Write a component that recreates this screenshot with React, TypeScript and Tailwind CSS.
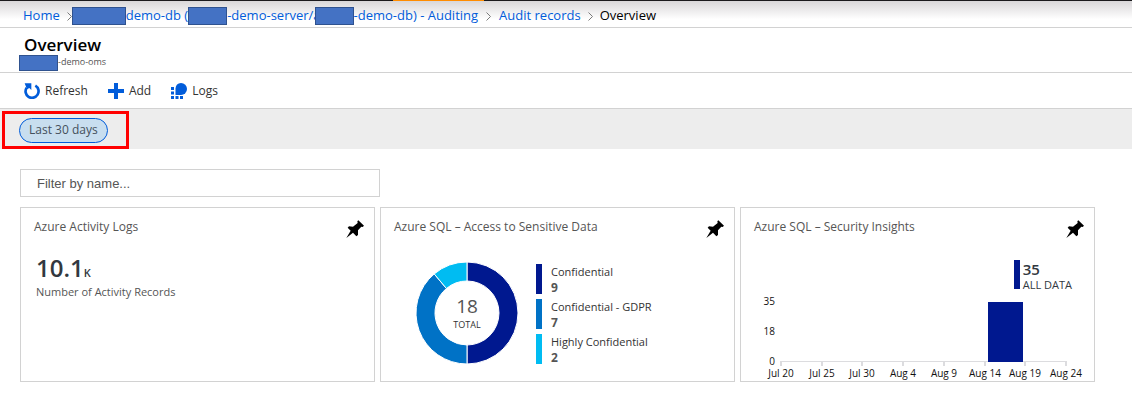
import React from "react";

const LINK = "text-[#015cda]";

function Redacted({ className }: { className: string }) {
  return (
    <span
      aria-hidden="true"
      className={`relative inline-block shrink-0 border border-[#2f528f] bg-[#4472c4] ${className}`}
    />
  );
}

function Chevron({ className = "" }: { className?: string }) {
  return (
    <svg
      aria-hidden="true"
      viewBox="0 0 5 9"
      className={`h-[9px] w-[5px] shrink-0 ${className}`}
      fill="none"
      stroke="#7a7a7a"
      strokeWidth="1"
    >
      <path d="M.5 .5 4.5 4.5 .5 8.5" />
    </svg>
  );
}

function Breadcrumb() {
  return (
    <nav
      aria-label="Breadcrumb"
      className="flex h-[27px] items-center whitespace-nowrap border-b border-[#d2d2d2] bg-linear-to-b from-[#d9d7d9] to-white to-70% pl-[23px] pt-1 text-[13px]"
    >
      <a href="#home" className={LINK}>
        Home
      </a>
      <Chevron className="ml-[7px]" />
      <a href="#auditing" className={`flex items-center ${LINK}`}>
        <Redacted className="h-[18px] w-[54px]" />
        <span>demo-db (</span>
        <Redacted className="h-[18px] w-[39px]" />
        <span>-demo-server/a</span>
        <Redacted className="-ml-[6px] h-[18px] w-[39px]" />
        <span>-demo-db) - Auditing</span>
      </a>
      <Chevron className="mx-2" />
      <a href="#audit-records" className={LINK}>
        Audit records
      </a>
      <Chevron className="mx-[7px]" />
      <span aria-current="page" className="text-black">
        Overview
      </span>
    </nav>
  );
}

function RefreshIcon() {
  return (
    <svg aria-hidden="true" viewBox="0 0 48 48" className="size-4" fill="none">
      <path d="M34 8A19.500 19.500 0 1 1 8 14" stroke="#015cda" strokeWidth="8" />
      <path d="M2 1H22V21L16 15L9 19Z" fill="#015cda" />
    </svg>
  );
}

function AddIcon() {
  return (
    <svg aria-hidden="true" viewBox="0 0 16 16" className="size-4" fill="#015cda">
      <path d="M6 0h4v6h6v4h-6v6H6v-6H0V6h6z" />
    </svg>
  );
}

function LogsIcon() {
  return (
    <svg aria-hidden="true" viewBox="0 0 16 16" className="size-4" fill="#015cda">
      <path d="M10 0a6 6 0 1 1 0 12H4.500V5.500A6 6 0 0 1 10 0z" />
      <path d="M0 4h3v3H0zM0 8.500h3v3H0zM0 13h3v3H0zM4.500 13h3v3h-3zM9 13h3v3H9z" />
    </svg>
  );
}

function ToolbarButton({ icon, label }: { icon: React.ReactNode; label: string }) {
  return (
    <button type="button" className="flex items-center gap-[5px] text-[12px] text-[#333]">
      {icon}
      {label}
    </button>
  );
}

function PinIcon() {
  return (
    <svg aria-hidden="true" viewBox="0 0 54 54" className="size-[18px]" fill="#000">
      <path d="M37 1 54 17 50 21 46 20 36 31 36 45 31 49 21 38 1 54 14 32 5 23 9 19 21 20 35 9 34 4Z" />
    </svg>
  );
}

function Card({ title, children }: { title: string; children: React.ReactNode }) {
  return (
    <section className="min-h-[175px] border border-[#d2d2d2] bg-white">
      <header className="flex justify-between pt-3 pr-[10px] pl-[13px]">
        <h2 className="text-[12px] leading-[14px] text-[#555]">{title}</h2>
        <button type="button" aria-label={`Pin ${title}`}>
          <PinIcon />
        </button>
      </header>
      {children}
    </section>
  );
}

const LEVELS = [
  { label: "Confidential", value: 9, bar: "bg-[#00188f]", color: "#00188f" },
  { label: "Confidential - GDPR", value: 7, bar: "bg-[#0072c6]", color: "#0072c6" },
  { label: "Highly Confidential", value: 2, bar: "bg-[#00bcf2]", color: "#00bcf2" },
];

function Donut() {
  const total = LEVELS.reduce((sum, level) => sum + level.value, 0);
  let start = 0;
  const point = (fraction: number, radius: number) => {
    const angle = fraction * 2 * Math.PI;
    return `${51 + radius * Math.sin(angle)} ${51 - radius * Math.cos(angle)}`;
  };
  const slices = LEVELS.map((level) => {
    const from = start / total;
    start += level.value;
    const to = start / total;
    return {
      color: level.color,
      d: `M${point(from, 51)}A51 51 0 0 1 ${point(to, 51)}L${point(to, 32)}A32 32 0 0 0 ${point(from, 32)}Z`,
    };
  });
  return (
    <div className="grid shrink-0 place-items-center">
      <svg aria-hidden="true" viewBox="0 0 102 102" className="col-start-1 row-start-1 size-[102px]">
        {slices.map((slice) => (
          <path key={slice.color} d={slice.d} fill={slice.color} stroke="#fff" strokeWidth="1" />
        ))}
      </svg>
      <div className="col-start-1 row-start-1 pt-1 text-center">
        <div className="text-[19px] leading-5 text-[#555]">18</div>
        <div className="text-[9px] leading-[18px] text-[#333]">TOTAL</div>
      </div>
    </div>
  );
}

const TICKS = [
  { x: 21, label: "Jul 20" },
  { x: 62, label: "Jul 25" },
  { x: 102, label: "Jul 30" },
  { x: 143, label: "Aug 4" },
  { x: 184, label: "Aug 9" },
  { x: 225, label: "Aug 14" },
  { x: 265, label: "Aug 19" },
  { x: 306, label: "Aug 24" },
];

function InsightsChart() {
  return (
    <svg
      role="img"
      aria-label="Security insights by day"
      viewBox="0 0 330 88"
      className="ml-[19px] h-[88px] w-[330px] text-[10px]"
      fill="#111"
    >
      <text x="15" y="13" textAnchor="end">35</text>
      <text x="15" y="43" textAnchor="end">18</text>
      <text x="15" y="73" textAnchor="end">0</text>
      <path d="M20 69.500H307" stroke="#dcdcdf" />
      {TICKS.map((tick) => (
        <g key={tick.label}>
          <path d={`M${tick.x} 69V74`} stroke="#dcdcdf" strokeWidth="2" />
          <text x={tick.x} y="85" textAnchor="middle">
            {tick.label}
          </text>
        </g>
      ))}
      <rect x="228" y="10" width="35" height="60" fill="#00188f" />
    </svg>
  );
}

export default function App() {
  return (
    <div className="bg-white font-['Open_Sans','Noto_Sans',sans-serif]">
      <div className="flex h-px bg-[#1b1a1d]">
        <div className="ml-[393px] w-[91px] bg-[#ff8c00]" />
      </div>
      <Breadcrumb />

      <header className="h-[45px] border-b border-[#d2d2d2] pt-[7px] pl-[19px]">
        <h1 className="pl-[5px] text-[17px] leading-5 font-semibold text-black">Overview</h1>
        <div className="flex h-4 items-center text-[9px] text-[#555]">
          <Redacted className="h-4 w-[39px]" />
          <span className="-mt-[2px]">-demo-oms</span>
        </div>
      </header>

      <div className="flex h-9 items-center gap-5 border-b border-[#d2d2d2] pt-px pl-6">
        <ToolbarButton icon={<RefreshIcon />} label="Refresh" />
        <ToolbarButton icon={<AddIcon />} label="Add" />
        <ToolbarButton icon={<LogsIcon />} label="Logs" />
      </div>

      <div className="relative h-10 bg-[#ededed] pt-[7px] pl-[19px]">
        <button
          type="button"
          className="h-[25px] rounded-full border border-[#015cda] bg-[#c8deef] px-[9px] text-[12px] text-[#44505c]"
        >
          Last 30 days
        </button>
        <div className="pointer-events-none absolute top-[2px] left-[2px] h-[38px] w-[127px] border-3 border-[#ff0000]" />
      </div>

      <main className="pt-5 pr-[37px] pb-7 pl-5">
        <input
          type="text"
          aria-label="Filter by name"
          placeholder="Filter by name..."
          className="block h-7 w-[360px] border border-[#d2d2d2] px-4 font-['Liberation_Sans',sans-serif] text-[13px] text-[#333] outline-none placeholder:text-[#555]"
        />

        <div className="mt-[10px] grid grid-cols-3 gap-[5px]">
          <Card title="Azure Activity Logs">
            <div className="pt-[18px] pl-[15px]">
              <div className="text-[24px] leading-6 font-semibold text-[#32383f]">
                10.1<span className="text-[11px]">K</span>
              </div>
              <div className="text-[11px] leading-[14px] text-[#555]">Number of Activity Records</div>
            </div>
          </Card>

          <Card title="Azure SQL – Access to Sensitive Data">
            <div className="flex gap-[18px] pt-[24px] pl-[35px]">
              <Donut />
              <ul className="flex flex-col gap-[5px] pt-[2px]">
                {LEVELS.map((level) => (
                  <li key={level.label} className="flex h-[30px] gap-[9px]">
                    <span className={`w-[6px] ${level.bar}`} />
                    <div className="text-[11px] leading-4 text-[#333]">
                      <div>{level.label}</div>
                      <div className="text-[12px] font-bold text-[#555]">{level.value}</div>
                    </div>
                  </li>
                ))}
              </ul>
            </div>
          </Card>

          <Card title="Azure SQL – Security Insights">
            <div className="flex justify-end gap-[3px] pt-[22px] pr-[22px]">
              <span className="h-[29px] w-[6px] bg-[#00188f]" />
              <div className="text-[#32383f]">
                <div className="text-[15px] leading-[18px] font-semibold">35</div>
                <div className="text-[11px] leading-[14px]">ALL DATA</div>
              </div>
            </div>
            <InsightsChart />
          </Card>
        </div>
      </main>
    </div>
  );
}
